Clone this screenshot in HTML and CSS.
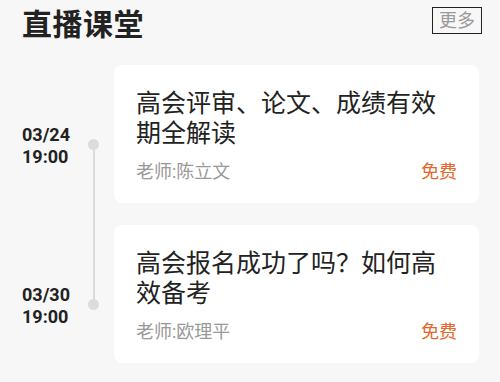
FILE: index.html
```html
<!DOCTYPE html>
<html lang="zh-CN">
<head>
<meta charset="utf-8">
<link rel="stylesheet" href="styles.css">
</head>
<body>
<div class="page">
  <header class="header">
    <h1 class="title">直播课堂</h1>
    <a class="more">更多</a>
  </header>
  <ul class="list">
    <li class="row has-next">
      <div class="time-col">
        <div class="date">03/24<br>19:00</div>
        <span class="dot"></span>
      </div>
      <div class="card">
        <div class="card-title">高会评审、论文、成绩有效期全解读</div>
        <div class="card-foot">
          <span class="teacher">老师:陈立文</span>
          <span class="price">免费</span>
        </div>
      </div>
    </li>
    <li class="row">
      <div class="time-col">
        <div class="date">03/30<br>19:00</div>
        <span class="dot"></span>
      </div>
      <div class="card">
        <div class="card-title">高会报名成功了吗？如何高效备考</div>
        <div class="card-foot">
          <span class="teacher">老师:欧理平</span>
          <span class="price">免费</span>
        </div>
      </div>
    </li>
  </ul>
</div>
</body>
</html>
```
FILE: styles.css
```css
html, body {
  margin: 0;
  padding: 0;
  background: #f7f7f7;
}
body {
  font-family: Roboto, "Noto Sans CJK SC", sans-serif;
  color: #222;
}
.page {
  width: 500px;
  height: 382px;
  overflow: hidden;
}
.header {
  display: flex;
  justify-content: space-between;
  align-items: flex-start;
  padding: 7px 18px 0 22px;
  height: 58px;
}
.title {
  margin: 0;
  font-size: 30px;
  line-height: 36px;
  font-weight: 700;
  color: #222;
  letter-spacing: 0.5px;
}
.more {
  display: block;
  border: 1px solid #222;
  padding: 0 6px;
  font-size: 18px;
  line-height: 25px;
  color: #999;
}
.list {
  list-style: none;
  margin: 0;
  padding: 0 21px 0 22px;
}
.row {
  display: flex;
  align-items: flex-start;
  margin-bottom: 22px;
}
.time-col {
  width: 77px;
  margin-right: 15px;
  margin-top: 59px;
  height: 44px;
  display: flex;
  align-items: center;
  justify-content: space-between;
}
.date {
  font-size: 18px;
  line-height: 22px;
  font-weight: 700;
  color: #222;
}
.dot {
  position: relative;
  width: 11px;
  height: 11px;
  border-radius: 50%;
  background: #dcdcdc;
  margin-bottom: 4px;
}
.has-next .dot::after {
  content: "";
  position: absolute;
  left: 4.5px;
  top: 5px;
  width: 2px;
  height: 160px;
  background: #dcdcdc;
}
.card {
  flex: 1;
  background: #fff;
  border-radius: 8px;
  padding: 24px 22px 19px 22px;
  height: 138px;
  box-sizing: border-box;
}
.card-title {
  font-size: 25px;
  line-height: 30px;
  color: #222;
}
.card-foot {
  display: flex;
  justify-content: space-between;
  margin-top: 11px;
  font-size: 18px;
  line-height: 24px;
}
.teacher {
  color: #999;
}
.price {
  color: #e4672c;
}
```
